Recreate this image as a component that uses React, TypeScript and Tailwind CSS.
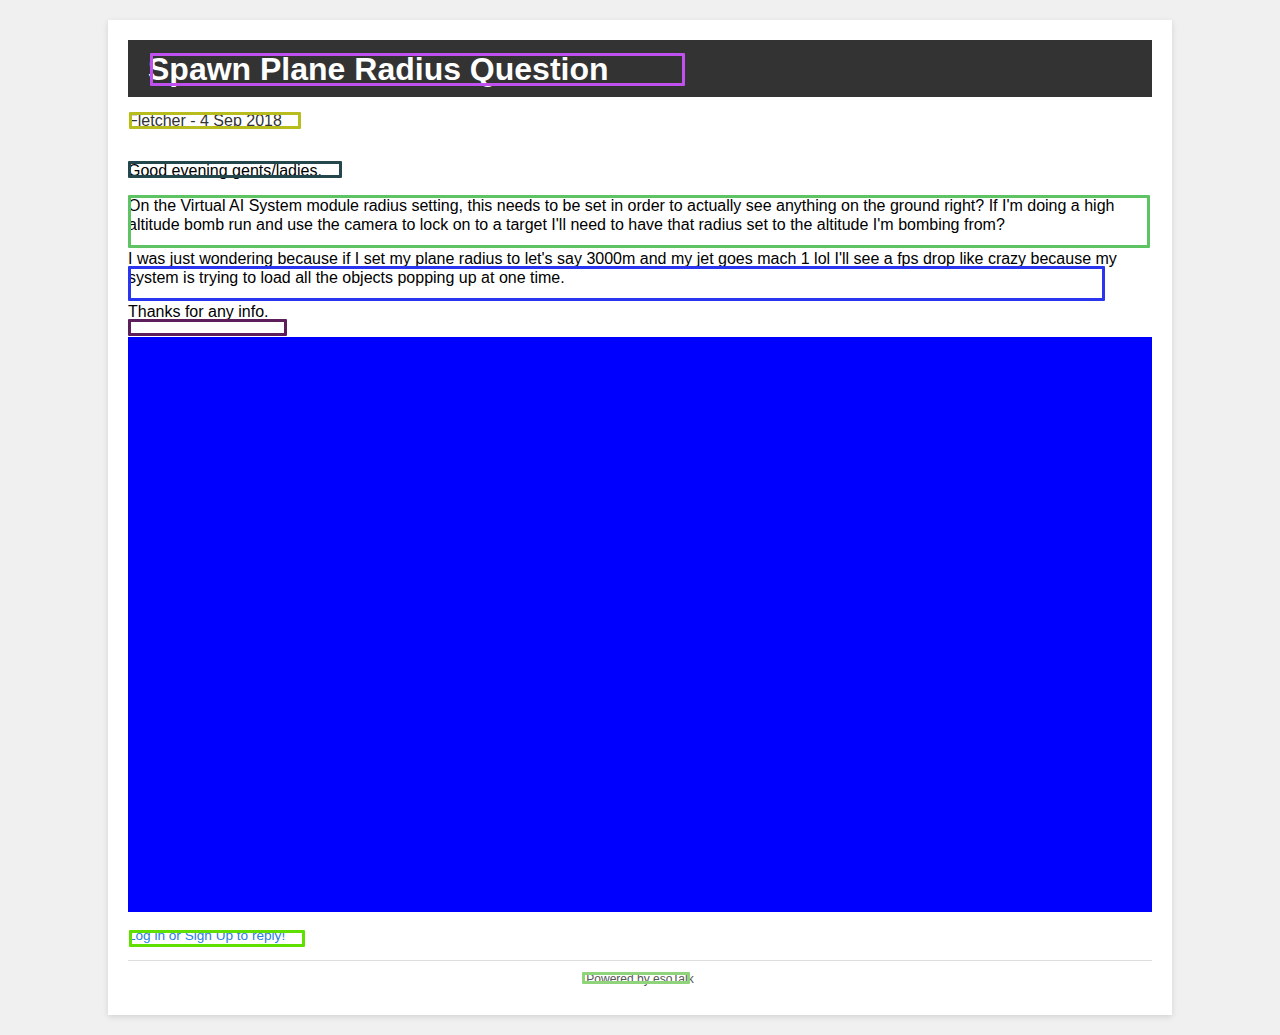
import React from "react";

// Annotation outlines that sit over the page, in card coordinates
const BOXES: { cls: string }[] = [
  { cls: "left-[42px] top-[33px] w-[535px] h-[33px] border-[#c050f0]" },
  { cls: "left-[21px] top-[92px] w-[172px] h-[17px] border-[#b8bc1c]" },
  { cls: "left-[20px] top-[141px] w-[214px] h-[17px] border-[#23474d]" },
  { cls: "left-[20px] top-[175px] w-[1022px] h-[53px] border-[#5ec463]" },
  { cls: "left-[20px] top-[246px] w-[977px] h-[35px] border-[#2a35f0]" },
  { cls: "left-[20px] top-[299px] w-[159px] h-[17px] border-[#5c1f5c]" },
  { cls: "left-[21px] top-[910px] w-[176px] h-[17px] border-[#5fe000]" },
  { cls: "left-[474px] top-[952px] w-[108px] h-[12px] border-[#8fd47a]" },
];

export default function App() {
  return (
    <div className="min-h-screen bg-[#f0f0f0] py-5 font-['Liberation_Sans',Arial,sans-serif]">
      <div className="relative mx-auto w-[1064px] bg-white p-5 shadow-[0_2px_6px_rgba(0,0,0,0.12)]">
        <div className="h-[57px] bg-[#333333] px-5">
          <h1 className="text-[32px] font-bold leading-[58px] text-white">Spawn Plane Radius Question</h1>
        </div>

        <div className="mt-[15px] text-[16px] leading-[18px] text-[#333]">Fletcher - 4 Sep 2018</div>

        <div className="mt-[32px] text-[16px] leading-[1.15] text-black">
          <p className="mb-[17px]">Good evening gents/ladies.</p>
          <p className="mb-4">
            On the Virtual AI System module radius setting, this needs to be set in order to actually see anything on the
            ground right? If I'm doing a high altitude bomb run and use the camera to lock on to a target I'll need to have
            that radius set to the altitude I'm bombing from?
          </p>
          <p className="mb-4">
            I was just wondering because if I set my plane radius to let's say 3000m and my jet goes mach 1 lol I'll see a
            fps drop like crazy because my system is trying to load all the objects popping up at one time.
          </p>
          <p className="mb-4">Thanks for any info.</p>
        </div>

        <div className="h-[575px] w-full bg-[#0000ff]" />

        <a href="#" className="mt-4 block text-[13.6px] leading-4 text-[#2a7de1]">
          Log in or Sign Up to reply!
        </a>

        <div className="mt-4 border-t border-[#dddddd] pt-[11px] pb-[9px] text-center text-[12px] leading-[14px] text-[#555]">
          Powered by esoTalk
        </div>

        {BOXES.map((b, i) => (
          <div key={i} className={`pointer-events-none absolute rounded-[1px] border-[3px] ${b.cls}`} />
        ))}
      </div>
    </div>
  );
}
